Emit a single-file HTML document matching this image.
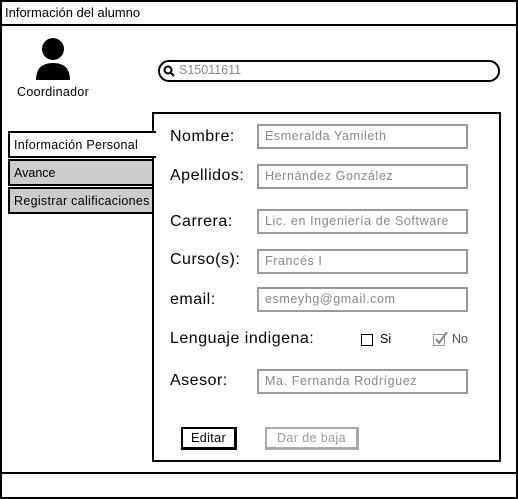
<html><head><style>
body{margin:0;width:518px;height:499px;position:relative;font-family:"Liberation Sans",sans-serif;background:#fff;overflow:hidden}
.a{position:absolute;box-sizing:border-box}
.lbl{position:absolute;left:170px;font-size:16px;letter-spacing:0.5px;color:#000}
.in{position:absolute;left:257px;width:211px;height:25px;border:2px solid #999;box-sizing:border-box;font-size:12.5px;letter-spacing:0.6px;color:#888;padding:3px 0 0 6px;white-space:nowrap}
</style></head><body>
<div class="a" style="left:0;top:0;width:518px;height:499px;border:2px solid #000"></div>
<div class="a" style="left:0;top:24px;width:518px;height:2px;background:#000"></div>
<div class="a" style="left:5px;top:5px;font-size:13px">Información del alumno</div>
<div class="a" style="left:0;top:472px;width:518px;height:2px;background:#000"></div>
<svg class="a" style="left:34px;top:37px" width="38" height="45"><circle cx="19" cy="12" r="11" fill="#000"/><path d="M2 43 Q2 26 19 26 Q36 26 36 43 Z" fill="#000"/></svg>
<div class="a" style="left:17px;top:85px;font-size:12.5px;letter-spacing:0.3px">Coordinador</div>
<div class="a" style="left:158px;top:60px;width:342px;height:22px;border:2px solid #000;border-radius:11px"></div>
<svg class="a" style="left:163px;top:65px" width="12" height="12"><circle cx="5" cy="5" r="3.5" stroke="#000" stroke-width="2" fill="none"/><path d="M7.5 7.5 L11 11" stroke="#000" stroke-width="2"/></svg>
<div class="a" style="left:179px;top:63px;font-size:12.5px;color:#888">S15011611</div>
<div class="a" style="left:152px;top:112px;width:349px;height:350px;border:2px solid #000"></div>
<div class="a" style="left:8px;top:131px;width:148px;height:27px;border:2px solid #000;border-right:none;background:#fff;font-size:12.5px;letter-spacing:0.3px;padding:5px 0 0 4px">Información Personal</div>
<div class="a" style="left:8px;top:159px;width:146px;height:27px;border:2px solid #000;background:#ccc;font-size:12.5px;padding:5px 0 0 4px">Avance</div>
<div class="a" style="left:8px;top:187px;width:146px;height:27px;border:2px solid #000;background:#ccc;font-size:12.5px;letter-spacing:0.3px;padding:5px 0 0 4px;white-space:nowrap">Registrar calificaciones</div>
<div class="lbl" style="top:128px">Nombre:</div><div class="in" style="top:124px">Esmeralda Yamileth</div>
<div class="lbl" style="top:167px">Apellidos:</div><div class="in" style="top:164px">Hernández González</div>
<div class="lbl" style="top:213px">Carrera:</div><div class="in" style="top:209px">Lic. en Ingeniería de Software</div>
<div class="lbl" style="top:251px">Curso(s):</div><div class="in" style="top:249px">Francés I</div>
<div class="lbl" style="top:291px">email:</div><div class="in" style="top:287px">esmeyhg@gmail.com</div>
<div class="lbl" style="top:330px">Lenguaje indigena:</div>
<div class="a" style="left:361px;top:334px;width:12px;height:12px;border:1.5px solid #000"></div>
<div class="a" style="left:380px;top:332px;font-size:12.5px">Si</div>
<div class="a" style="left:433px;top:334px;width:12px;height:12px;border:1.5px solid #999"></div>
<svg class="a" style="left:433px;top:330px" width="16" height="16"><path d="M3 9 L6 13 L14 2" stroke="#888" stroke-width="2" fill="none"/></svg>
<div class="a" style="left:452px;top:332px;font-size:12.5px;color:#555">No</div>
<div class="lbl" style="top:372px">Asesor:</div><div class="in" style="top:369px">Ma. Fernanda Rodríguez</div>
<div class="a" style="left:181px;top:427px;width:56px;height:23px;border:2px solid #000;border-right-width:3px;border-bottom-width:3px;font-size:12.5px;letter-spacing:0.4px;padding:2px 0 0 8px">Editar</div>
<div class="a" style="left:265px;top:427px;width:94px;height:23px;border:2px solid #aaa;border-right-width:3px;border-bottom-width:3px;font-size:12.5px;letter-spacing:0.4px;color:#999;padding:2px 0 0 10px">Dar de baja</div>
</body></html>
